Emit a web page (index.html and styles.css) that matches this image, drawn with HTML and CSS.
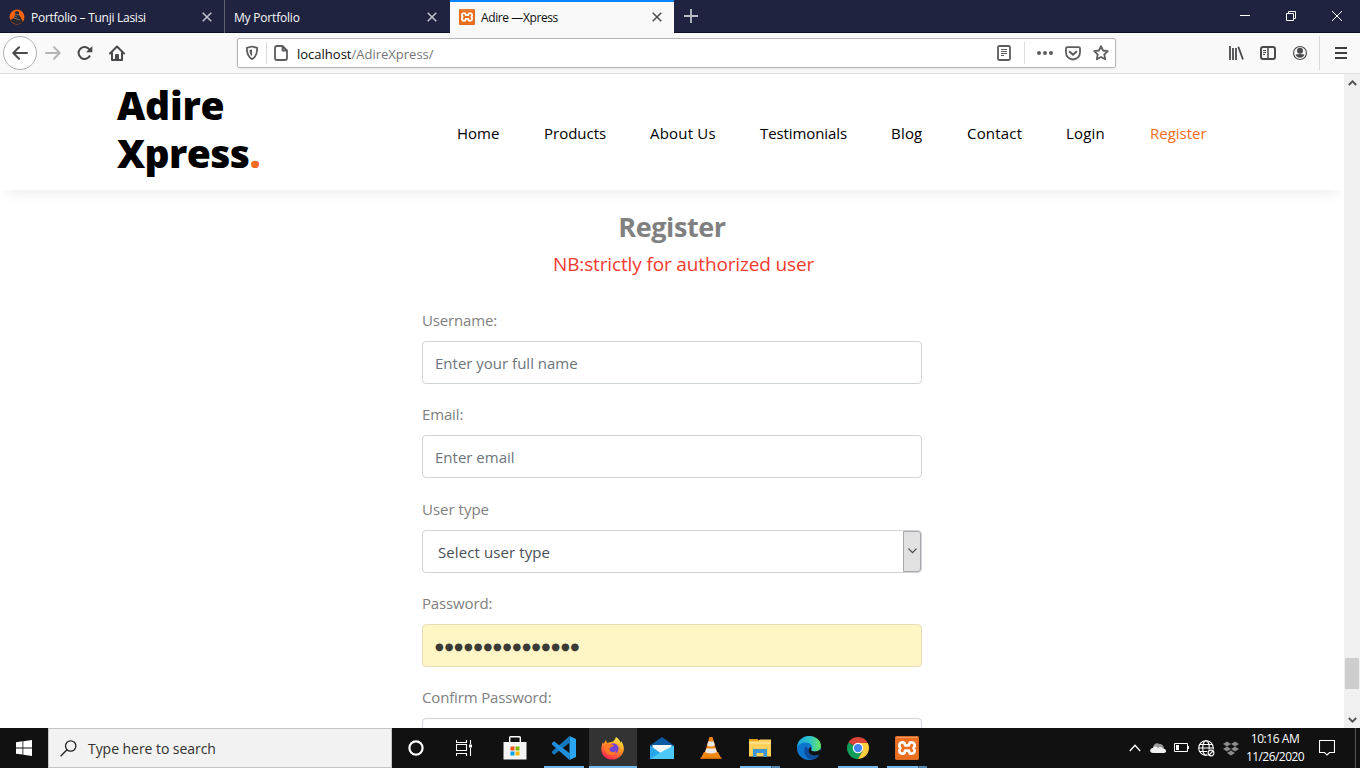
FILE: index.html
```html
<!DOCTYPE html>
<html lang="en">
<head>
<meta charset="utf-8">
<title>Adire —Xpress</title>
<link rel="stylesheet" href="styles.css">
</head>
<body>
<svg class="defs" width="0" height="0">
  <symbol id="xampp" viewBox="0 0 24 24">
    <rect width="24" height="24" rx="2" fill="#ec6f20"/><path d="M1.500 1h21" stroke="#fbb78b" stroke-width="1.200"/><rect x=".5" y=".5" width="23" height="23" rx="2" fill="none" stroke="#d66a26"/>
    <path d="M7.700 6.300q2.300 0 2.300 3h4q0-3 2.300-3c3.700 0 4.300 3.700 2.200 5.700 2.100 2 1.500 5.700-2.200 5.700q-2.300 0-2.300-3h-4q0 3-2.300 3c-3.700 0-4.300-3.700-2.200-5.700C3.400 10 4 6.300 7.700 6.300z" fill="none" stroke="#fff" stroke-width="2.700" stroke-linejoin="round"/>
  </symbol>
  <symbol id="close" viewBox="0 0 10 10"><path d="M.7.7l8.600 8.600M9.300.7L.7 9.300" stroke="currentColor" stroke-width="1.500"/></symbol>
</svg>
<div class="screen">
  <div class="tabs">
    <div class="tab">
      <svg class="favicon" width="16" height="16" viewBox="0 0 16 16"><circle cx="8" cy="8" r="7.500" fill="#f4630a"/><path d="M1 11l4-2 1-3V3l2-1 2 1v3l2 3 2 4c-3 3-9 3.500-13-2z" fill="#292a31"/><path d="M6 5l4 1M5 9l6 2M6 7l2 1" stroke="#8a817d" stroke-width=".8"/></svg>
      <span class="tab-title t1">Portfolio – Tunji Lasisi</span><svg class="x" width="10" height="10"><use href="#close"/></svg>
    </div>
    <div class="tab second"><span class="tab-title t2">My Portfolio</span><svg class="x" width="10" height="10"><use href="#close"/></svg></div>
    <div class="tab active"><svg class="favicon" width="16" height="16"><use href="#xampp"/></svg><span class="tab-title t3">Adire —Xpress</span><svg class="x" width="10" height="10"><use href="#close"/></svg></div>
    <svg class="plus" width="14" height="14" viewBox="0 0 14 14"><path d="M7 0v14M0 7h14" stroke="#bcbcc9" stroke-width="1.800"/></svg>
    <div class="win">
      <svg width="10" height="10"><path d="M0 4.500h10" stroke="#fff"/></svg>
      <svg width="10" height="10"><path d="M.5 2.500h7v7h-7zM2.500 2.500v-2h7v7h-2" fill="none" stroke="#fff"/></svg>
      <svg width="10" height="10"><path d="M0 0l10 10M10 0L0 10" stroke="#fff"/></svg>
    </div>
  </div>
  <div class="toolbar">
    <div class="back"><svg width="16" height="14" viewBox="0 0 16 14" fill="none" stroke="#4a4a4d" stroke-width="2" stroke-linecap="round" stroke-linejoin="round"><path d="M15 7H1.500M7 1.300L1.300 7 7 12.700"/></svg></div>
    <svg class="fwd" width="16" height="14" viewBox="0 0 16 14" fill="none" stroke="#b5b5b7" stroke-width="2" stroke-linecap="round" stroke-linejoin="round"><path d="M1 7h13.500M9 1.300L14.700 7 9 12.700"/></svg>
    <svg class="reload" width="16" height="16" viewBox="0 0 16 16"><path d="M13 10.500A6 6 0 1 1 12.500 4.500" fill="none" stroke="#4a4a4d" stroke-width="2"/><path d="M15.300 1v6.300H9z" fill="#4a4a4d"/></svg>
    <svg class="home" width="16" height="16" viewBox="0 0 16 16" fill="none" stroke="#4a4a4d" stroke-width="2" stroke-linejoin="round"><path d="M1 8.500L8 1.500l7 7M3 7.500V15h10V7.500M8 15v-4.500" stroke-linecap="round"/><path d="M6.500 9.500h3V15h-3z" stroke-width="1"/></svg>
    <div class="url">
      <svg class="shield" width="14" height="16" viewBox="0 0 14 16"><path d="M7 1.500l5.200 1.300c0 6-1 9.200-5.200 11.300C2.800 12 1.800 8.800 1.800 2.800z" fill="none" stroke="#5d5d60" stroke-width="1.800" stroke-linejoin="round"/><path d="M7 4.500v6.800C5 9.500 4.600 7.500 4.500 5z" fill="#5d5d60"/></svg>
      <i class="divider"></i>
      <svg class="page-icon" width="14" height="16" viewBox="0 0 14 16"><path d="M3 1h5.500L13 5.500V13q0 2-2 2H3q-2 0-2-2V3q0-2 2-2zM8.500 1v4.500H13" fill="none" stroke="#5d5d60" stroke-width="1.800" stroke-linejoin="round"/></svg>
      <span class="address">localhost<em>/AdireXpress/</em></span>
      <svg class="reader" width="14" height="16" viewBox="0 0 14 16"><rect x="1" y="1" width="12" height="14" rx="1.500" fill="none" stroke="#5d5d60" stroke-width="1.800"/><path d="M4 4.500h6M4 6.500h6M4 8.500h6M4 10.500h3" stroke="#5d5d60"/></svg>
      <i class="divider long"></i>
      <svg class="dots" width="16" height="4"><g fill="#5d5d60"><circle cx="2" cy="2" r="2"/><circle cx="8" cy="2" r="2"/><circle cx="14" cy="2" r="2"/></g></svg>
      <svg class="pocket" width="16" height="15" viewBox="0 0 16 15" fill="none" stroke="#5d5d60" stroke-linecap="round" stroke-linejoin="round"><path d="M2.300 1.200h11.400q1.300 0 1.300 1.300V6.500a7 7 0 0 1-14 0V2.500q0-1.300 1.300-1.300z" stroke-width="1.800"/><path d="M4.700 5.700L8 8.800l3.300-3.100" stroke-width="2"/></svg>
      <svg class="star" width="16" height="16" viewBox="0 0 16 16"><path d="M8 1.200l2 4.300 4.800.6-3.500 3.300.9 4.900L8 12l-4.200 2.300.9-4.900L1.200 6.100 6 5.500z" fill="none" stroke="#5d5d60" stroke-width="1.800" stroke-linejoin="round"/></svg>
    </div>
    <div class="tools">
      <svg width="16" height="14" viewBox="0 0 16 14"><path d="M2 0v14M5 2v12M8 2v12M10.300 .8L15 13.500" stroke="#4a4a4d" stroke-width="1.800"/></svg>
      <svg width="16" height="14" viewBox="0 0 16 14"><rect x="1" y="1" width="14" height="12" rx="2" fill="none" stroke="#4a4a4d" stroke-width="2"/><path d="M8 1v12" stroke="#4a4a4d" stroke-width="1.500"/><path d="M3 4.500h3M3 6.500h3M3 8.500h2" stroke="#4a4a4d"/></svg>
      <svg width="16" height="16" viewBox="0 0 16 16"><circle cx="8" cy="8" r="6.500" fill="none" stroke="#4a4a4d" stroke-width="1.100"/><circle cx="8" cy="5.800" r="3" fill="#4a4a4d"/><path d="M3.500 9.500Q8 8.500 12.500 9.500 11 12.800 8 12.800T3.500 9.500z" fill="#4a4a4d"/></svg>
    </div>
    <div class="burger"><svg width="12" height="12"><path d="M0 1h12M0 6h12M0 11h12" stroke="#3f3f42" stroke-width="2"/></svg></div>
  </div>
  <div class="viewport">
    <main class="page">
      <header class="site-header">
        <div class="logo"><span class="l1">Adire</span><br><span class="l2">Xpress<b>.</b></span></div>
        <nav class="nav"><a>Home</a><a>Products</a><a class="n3">About Us</a><a class="n4">Testimonials</a><a class="n3">Blog</a><a class="n3">Contact</a><a class="n3">Login</a><a class="current">Register</a></nav>
      </header>
      <h2 class="title">Register</h2>
      <p class="notice">NB:strictly for authorized user</p>
      <form class="form">
        <div class="group"><label>Username:</label><input class="field" placeholder="Enter your full name"></div>
        <div class="group"><label>Email:</label><input class="field" placeholder="Enter email"></div>
        <div class="group"><label class="ut">User type</label><div class="field select"><span>Select user type</span><div class="drop"><svg width="9" height="6"><path d="M.5 .7l4 4 4-4" fill="none" stroke="#444" stroke-width="1.200"/></svg></div></div></div>
        <div class="group"><label>Password:</label><div class="field filled">●●●●●●●●●●●●●●●</div></div>
        <div class="group"><label>Confirm Password:</label><input class="field"></div>
      </form>
    </main>
    <div class="scroll">
      <svg width="9" height="6"><path d="M.8 5l3.700-3.700L8.200 5" fill="none" stroke="#505050" stroke-width="1.800"/></svg>
      <div class="thumb"></div>
      <svg width="9" height="6"><path d="M.8 1l3.700 3.700L8.200 1" fill="none" stroke="#505050" stroke-width="1.800"/></svg>
    </div>
  </div>
  <footer class="taskbar">
    <div class="tile"><svg width="16" height="16" viewBox="0 0 16 16"><path d="M0 2.200l6.500-.9v6.200H0zM7.300 1.200L16 0v7.500H7.300zM0 8.400h6.500v6.200L0 13.800zM7.300 8.400H16V16l-8.700-1.200z" fill="#fff"/></svg></div>
    <div class="search"><svg width="17" height="17" viewBox="0 0 17 17"><circle cx="10.700" cy="6" r="5.200" fill="none" stroke="#222" stroke-width="1.300"/><path d="M7 9.700L.6 16.200" stroke="#222" stroke-width="1.300"/></svg><span>Type here to search</span></div>
    <div class="tile"><svg width="16" height="16"><circle cx="8" cy="8" r="6.600" fill="none" stroke="#fff" stroke-width="2.200"/></svg></div>
    <div class="tile"><svg width="16" height="16" viewBox="0 0 16 16"><path d="M.5 0v2.500h10V0M.5 16v-2.500h10V16M.5 4.500h10v6H.500zM14.500 0v4M14.500 8v8" fill="none" stroke="#fff" stroke-width="1.100"/><path d="M13 4.500h3v3h-3z" fill="#fff"/></svg></div>
    <div class="apps">
      <div class="tile store"><svg width="24" height="24" viewBox="0 0 24 24"><path d="M6.700 7V1.500Q6.700.7 7.500.7h9q.8 0 .8.800V7" fill="none" stroke="#fff" stroke-width="1.400"/><path d="M.5 6h23v17.500H.5z" fill="#f4f4f4"/><path d="M7.500 10.500h4v4h-4z" fill="#f1511b"/><path d="M12.500 10.500h4v4h-4z" fill="#7fba00"/><path d="M7.500 15.500h4v4h-4z" fill="#00a4ef"/><path d="M12.500 15.500h4v4h-4z" fill="#ffb900"/></svg></div>
      <div class="tile run"><svg width="24" height="24" viewBox="0 0 24 24"><path d="M17.500 0L24 3v18l-6.500 3z" fill="#2aa5f2"/><path d="M17.500 0L0 15.500v1.500l2 1.800L18 6.500z" fill="#1278c0"/><path d="M17.500 24L0 8.500V7l2-1.800L18 17.500z" fill="#208fdd"/></svg></div>
      <div class="tile run full"><svg width="24" height="24" viewBox="0 0 24 24"><defs><linearGradient id="ff" x1=".8" y1="0" x2=".3" y2="1"><stop offset="0" stop-color="#fff44f"/><stop offset=".45" stop-color="#ff9722"/><stop offset="1" stop-color="#ff2056"/></linearGradient></defs><path d="M15 1c3 2 4 4 4.500 6l.5-2c3 4 4 9 1.300 13-3 5-10 7.300-16 4C-.5 19-.6 11 2 6l.5 2L5 4l1 3 4-1c2 0 4-2 5-5z" fill="url(#ff)"/><circle cx="12.300" cy="12.500" r="5.300" fill="#7044d4"/><path d="M4 9c3-3 6-1 9 .5-1 1.500-4 1.500-4.500 3 0 4 4 5 7 2-1 5-6 6-9.500 3S4 11 4 9z" fill="#ff7a22"/></svg></div>
      <div class="tile"><svg width="24" height="24" viewBox="0 0 24 24"><path d="M0 9.500L12 1l12 8.500v4H0z" fill="#0c59a4"/><path d="M2.500 9h19v8h-19z" fill="#f5f8fa"/><path d="M0 9.500L12 18l12-8.500V23H0z" fill="#28a8ea"/><path d="M0 23l14-8.500L24 9.500V23z" fill="#4dc8fa"/></svg></div>
      <div class="tile"><svg width="24" height="24" viewBox="0 0 24 24"><path d="M5 16h14l3.500 7h-21z" fill="#f28a0b"/><path d="M10.500 1h3l5 17q-6.500 4-13 0z" fill="#f58612"/><path d="M9.200 5.500h5.600l1.100 4q-3.900 2-7.800 0zM7.200 12.500h9.600l1.100 3.800q-5.900 2.500-11.800 0z" fill="#e9e9e9"/><path d="M1.500 21.500h21V23h-21z" fill="#d66c00"/></svg></div>
      <div class="tile run pair"><svg width="24" height="24" viewBox="0 0 24 24"><path d="M1 3h8.500l2 2H1z" fill="#e3a008"/><path d="M1 5h9l2-1.500h11v17H1z" fill="#ffd15c"/><path d="M1 6h22v2H1z" fill="#ffdf83"/><path d="M5 21v-8h14v8h-3.500v-4h-7v4z" fill="#3d96d5"/></svg></div>
      <div class="tile"><svg width="24" height="24" viewBox="0 0 24 24"><defs><linearGradient id="eg"><stop offset="0" stop-color="#1ba5e2"/><stop offset=".55" stop-color="#31c6c7"/><stop offset="1" stop-color="#6be55a"/></linearGradient></defs><circle cx="12" cy="12" r="12" fill="#0c75ce"/><path d="M0 11C1 4 6 0 12 0c7 0 12 4.500 12 10 0 3.500-3 5.500-6 5.500-3.500 0-4.500-1.300-3.500-2.500C16.500 10 13 6.500 9 6.500 5 6.500 1.500 8.500 0 11z" fill="url(#eg)"/><path d="M9 10C5 14 8 22 14 23.700 18 23.500 21 21.500 22.800 18.500 17 21.500 10.500 18 11.500 13z" fill="#104f9d"/><path d="M14.500 13c-1 1.200 0 2.500 3.500 2.500 2 0 3.700-.7 5.200-2.200l1 3.200-1.400 2C19 20.300 14 20 12 16.500 11 14 11.800 12 13.500 11z" fill="#111"/></svg></div>
      <div class="tile run"><svg width="22" height="22" viewBox="0 0 24 24"><path d="M12 12L1.600 6A12 12 0 0 1 22.400 6z" fill="#db4437"/><path d="M12 12L1.600 6A12 12 0 0 0 12 24l5-9z" fill="#0f9d58"/><path d="M12 6.500h10.700A12 12 0 0 1 12 24l5-9z" fill="#ffcd40"/><circle cx="12" cy="12" r="5.700" fill="#fff"/><circle cx="12" cy="12" r="4.500" fill="#4285f4"/></svg></div>
      <div class="tile run pair"><svg width="24" height="24"><use href="#xampp"/></svg></div>
    </div>
    <div class="tray">
      <svg width="12" height="8"><path d="M.8 7L6 1.300 11.200 7" fill="none" stroke="#fff" stroke-width="1.300"/></svg>
      <svg width="16" height="12" viewBox="0 0 16 12"><path d="M3 6C3 2 7 0 9.500 2 12 1.500 14 4 14 7z" fill="#999"/><path d="M3 11C-1 11-.5 6 3 6c1-2 4-2 5 0 2-2 4-1 5 .500 4 .5 4 4.500 1 4.500z" fill="#f1f1f1"/></svg>
      <svg width="15" height="10"><path d="M.5.5h13v8H.500zM14.500 3v3" fill="none" stroke="#fff"/><path d="M2 2h3v5H2z" fill="#fff"/></svg>
      <svg width="17" height="17" viewBox="0 0 17 17" fill="none" stroke="#fff" stroke-width="1.100"><circle cx="8" cy="8" r="7.300"/><ellipse cx="8" cy="8" rx="3.300" ry="7.300"/><path d="M.7 8h14.600M1.500 4.500h13M1.500 11.500h13"/><circle cx="13" cy="13" r="4" fill="#111" stroke="none"/><circle cx="13" cy="13" r="2.900"/><path d="M11 15l4-4"/></svg>
      <svg width="16" height="15" viewBox="0 0 16 15"><path d="M4 .5l4 2.500-4 2.500L0 3zM12 .5L16 3l-4 2.500L8 3zM4 5.500L8 8l-4 2.500L0 8zM12 5.500L16 8l-4 2.500L8 8zM8 9.500l4 2.500-4 2.500L4 12z" fill="#8b8b8b"/></svg>
    </div>
    <div class="clock"><span class="time">10:16 AM</span><span class="date">11/26/2020</span></div>
    <svg class="note" width="16" height="16" viewBox="0 0 16 16"><path d="M.5.500h15v12h-5L8 15l-2.500-2.500h-5z" fill="none" stroke="#fff" stroke-width="1.100"/></svg>
    <div class="peek"></div>
  </footer>
</div>
</body>
</html>
```
FILE: styles.css
```css
* { box-sizing: border-box; }
body { margin: 0; font-family: "Open Sans", "Noto Sans", sans-serif; overflow: hidden; background: #fff; }
svg { display: block; flex: none; }
.defs { position: absolute; }
.screen { width: 1360px; height: 768px; display: flex; flex-direction: column; }

/* Browser tabs */
.tabs { height: 33px; flex: none; display: flex; background: #202340; box-shadow: inset 0 -1px #0d0f24; color: #f9f9fa; font-size: 12px; }
.tab { width: 225px; height: 33px; display: flex; align-items: center; padding: 1px 12px 0 9px; border-right: 1px solid #5d5f73; }
.tab.second { border-right: 0; padding-right: 13px; }
.tab.active { width: 224px; background: #f9f9fa; color: #0c0c0d; border-right: 0; border-top: 2px solid #0a84ff; padding-top: 0; }
.active .favicon, .active .x { margin-bottom: 1px; }
.favicon { margin-right: 6px; }
.tab-title { white-space: nowrap; }
.t1 { letter-spacing: -.27px; }
.t2 { letter-spacing: -.2px; }
.t3 { letter-spacing: -.4px; }
.x { margin-left: auto; color: #c3c3cd; }
.active .x { color: #4a4a4d; }
.plus { margin: 9px 0 0 10px; }
.win { margin-left: auto; display: flex; gap: 36px; padding: 11px 18px 0 0; }

/* Navigation toolbar */
.toolbar { height: 41px; flex: none; display: flex; align-items: center; background: #f9f9fa; border-bottom: 1px solid #dfdfe0; }
.back { width: 34px; height: 34px; margin-left: 3px; border: 1px solid #b1b1b3; border-radius: 50%; background: #fff; display: grid; place-items: center; flex: none; }
.fwd { margin-left: 8px; }
.reload { margin-left: 16px; }
.home { margin-left: 16px; }
.url { width: 879px; height: 30px; margin-left: 112px; background: #fff; border: 1px solid #b6b6b8; border-radius: 2px; box-shadow: 0 1px 3px rgba(0,0,0,.08); display: flex; align-items: center; flex: none; }
.shield { margin-left: 7px; }
.divider { width: 1px; height: 22px; background: #dcdcdd; margin: 0 7px; }
.divider.long { margin: 0 12px 0 13px; }
.address { font-size: 13px; color: #0c0c0d; margin-left: 9px; padding-top: 1px; }
.address em { font-style: normal; color: #76767a; }
.reader { margin-left: auto; }
.pocket { margin-left: 12px; }
.star { margin: 0 6px 0 12px; }
.tools { display: flex; align-items: center; gap: 16px; margin-left: 112px; }
.burger { height: 34px; margin-left: 11px; padding-left: 15px; border-left: 1px solid #d9d9da; display: flex; align-items: center; }

/* Page */
.viewport { flex: 1; min-height: 0; display: flex; overflow: hidden; }
.page { width: 1344px; overflow: hidden; flex: none; }
.site-header { height: 116px; display: flex; align-items: center; box-shadow: 0 8px 15px -7px rgba(0,0,0,.1); }
.logo { width: 340px; margin-left: 117px; padding-bottom: 6px; font-size: 39px; line-height: 48px; font-weight: 800; color: #000; }
.l1 { letter-spacing: -.2px; }
.l2 { letter-spacing: -.6px; }
.logo b { color: #f26b21; }
.nav { display: grid; grid-template-columns: 87px 106px 110px 131px 76px 99px 84px 58px; font-size: 15px; color: #000; white-space: nowrap; padding-top: 1px; }
.n3 { letter-spacing: .2px; }
.n4 { letter-spacing: -.1px; }
.current { color: #f26b21; }
.title { margin: 19px 0 0; text-align: center; font-size: 27px; line-height: 36px; font-weight: 700; color: #808080; letter-spacing: -.4px; }
.notice { margin: 4px 0 0 553px; font-size: 19px; line-height: 30px; color: #f33a30; white-space: nowrap; letter-spacing: -.14px; }
.form { width: 500px; margin: 29px 0 0 422px; padding-top: 1px; color: #808080; font-size: 15px; }
.group { height: 75px; margin-bottom: 19.300px; }
.group label { display: block; height: 23px; line-height: 22px; margin-bottom: 9px; letter-spacing: -.15px; }
.group .ut { letter-spacing: 0; }
.field { display: flex; align-items: center; width: 500px; height: 43px; border: 1px solid #ced4da; border-radius: 4px; padding: 0 12px; font: 15px "Open Sans", sans-serif; color: #495057; background: #fff; }
.field::placeholder { color: #6c757d; opacity: 1; }
.select { padding: 0 0 0 15px; justify-content: space-between; }
.select span { padding-top: 2px; letter-spacing: .1px; }
.drop { width: 18px; height: 41px; background: #e1e1e1; border: 1px solid #a9a9a9; border-radius: 0 3px 3px 0; display: grid; place-items: center; }
.filled { background: #fff5c5; border-color: #e8dcb3; color: #3a3a36; font-family: "DejaVu Sans", sans-serif; font-size: 10px; letter-spacing: .96px; padding-top: 3px; }
.scroll { width: 16px; background: #f0f0f0; display: flex; flex-direction: column; align-items: center; padding: 6px 0 5px; }
.thumb { width: 14px; height: 31px; background: #cdcdcd; margin: auto 0 28px; }

/* Taskbar */
.taskbar { height: 40px; flex: none; display: flex; align-items: center; background: #111; color: #fff; }
.tile { width: 48px; height: 40px; display: grid; place-items: center; flex: none; }
.store { padding-right: 1px; }
.search { width: 344px; height: 40px; background: #f2f2f2; border: 1px solid #c3c3c3; display: flex; align-items: center; padding-left: 11px; gap: 11px; color: #303030; font-size: 14px; letter-spacing: -.05px; flex: none; }
.apps { display: flex; gap: 1px; margin-left: 3px; }
.run { background: linear-gradient(#76b9ed, #76b9ed) center bottom / 40px 2px no-repeat; }
.run.full { background: linear-gradient(#76b9ed, #76b9ed) center bottom / 48px 2px no-repeat #333; }
.run.pair { background: linear-gradient(90deg, #76b9ed 31px, #395f7e 31px, #395f7e 32px, #5288b1 32px) center bottom / 40px 2px no-repeat; }
.tray { display: flex; align-items: center; gap: 8.500px; margin-left: 198px; }
.clock { width: 72px; display: flex; flex-direction: column; align-items: center; font-size: 12px; line-height: 18px; white-space: nowrap; letter-spacing: -.45px; }
.date { letter-spacing: -.55px; }
.note { margin-left: 8px; }
.peek { width: 5px; height: 40px; border-left: 1px solid #555; margin-left: auto; }
```
